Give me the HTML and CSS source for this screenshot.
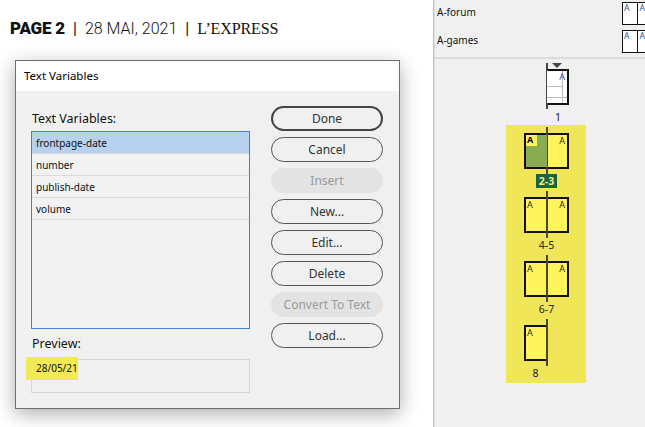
FILE: index.html
```html
<!DOCTYPE html>
<html>
<head>
<meta charset="utf-8">
<link rel="stylesheet" href="styles.css">
</head>
<body>
<div class="screen">
  <div class="left">
    <header class="masthead">
      <b class="mh-page">PAGE 2</b><span class="mh-sep">|</span><span class="mh-date">28 MAI, 2021</span><span class="mh-sep">|</span><span class="mh-pub">L’EXPRESS</span>
    </header>
    <div class="dialog">
      <div class="dlg-title">Text Variables</div>
      <div class="dlg-body">
        <div class="dlg-main">
          <div class="field-label">Text Variables:</div>
          <ul class="var-list">
            <li class="selected">frontpage-date</li>
            <li>number</li>
            <li>publish-date</li>
            <li>volume</li>
          </ul>
          <div class="field-label preview-label">Preview:</div>
          <div class="preview"><span class="hl"></span><span class="preview-text">28/05/21</span></div>
        </div>
        <div class="dlg-buttons">
          <button class="btn btn-default">Done</button>
          <button class="btn">Cancel</button>
          <button class="btn btn-disabled">Insert</button>
          <button class="btn">New...</button>
          <button class="btn">Edit...</button>
          <button class="btn">Delete</button>
          <button class="btn btn-disabled">Convert To Text</button>
          <button class="btn">Load...</button>
        </div>
      </div>
    </div>
  </div>
  <aside class="pages-panel">
    <div class="masters">
      <div class="master-row">
        <span class="master-name">A-forum</span>
        <div class="master-thumb"><span class="mpage">A</span><span class="mpage">A</span></div>
      </div>
      <div class="master-row">
        <span class="master-name">A-games</span>
        <div class="master-thumb"><span class="mpage">A</span><span class="mpage">A</span></div>
      </div>
    </div>
    <div class="pages">
      <div class="spread first">
        <div class="sp-inner single-right">
          <div class="sp-pages">
            <div class="pg pg-white">
              <span class="pl pl-v"></span><span class="pl pl-h1"></span><span class="pl pl-h2"></span>
              <span class="pa pa-right blue">A</span>
            </div>
          </div>
          <div class="sp-label">1</div>
        </div>
        <span class="marker"></span>
      </div>
      <div class="section">
        <div class="spread">
          <div class="sp-inner">
            <div class="sp-pages">
              <div class="pg pg-green"><span class="pa pa-left pa-sel">A</span></div>
              <div class="pg"><span class="pa pa-right">A</span></div>
            </div>
            <div class="sp-label"><span class="sel-label">2-3</span></div>
          </div>
        </div>
        <div class="spread">
          <div class="sp-inner">
            <div class="sp-pages">
              <div class="pg"><span class="pa pa-left">A</span></div>
              <div class="pg"><span class="pa pa-right">A</span></div>
            </div>
            <div class="sp-label">4-5</div>
          </div>
        </div>
        <div class="spread">
          <div class="sp-inner">
            <div class="sp-pages">
              <div class="pg"><span class="pa pa-left">A</span></div>
              <div class="pg"><span class="pa pa-right">A</span></div>
            </div>
            <div class="sp-label">6-7</div>
          </div>
        </div>
        <div class="spread">
          <div class="sp-inner single-left">
            <div class="sp-pages">
              <div class="pg"><span class="pa pa-left">A</span></div>
            </div>
            <div class="sp-label">8</div>
          </div>
        </div>
      </div>
    </div>
  </aside>
</div>
</body>
</html>
```
FILE: styles.css
```css
* { box-sizing: border-box; }
body { margin: 0; }
.screen {
  display: flex;
  width: 645px;
  height: 427px;
  overflow: hidden;
  background: #fff;
  font-family: "Noto Sans", sans-serif;
}
.left {
  width: 433px;
  flex: none;
  display: flex;
  flex-direction: column;
}
.masthead {
  height: 60px;
  padding: 18px 0 0 10px;
  display: flex;
  align-items: baseline;
  line-height: 20px;
  color: #111;
}
.mh-page {
  font-family: Roboto, sans-serif;
  font-weight: 900;
  font-size: 17px;
  letter-spacing: -0.2px;
}
.mh-sep {
  font-family: Roboto, sans-serif;
  font-size: 16px;
  margin: 0 8px;
  font-weight: 400;
}
.mh-date {
  font-family: Roboto, sans-serif;
  font-weight: 300;
  font-size: 16px;
  letter-spacing: 0;
}
.mh-pub {
  font-family: "Liberation Serif", serif;
  font-size: 16px;
  letter-spacing: -0.1px;
}
.dialog {
  margin-left: 15px;
  width: 385px;
  border: 1px solid #6f6f6f;
  background: #f0f0f0;
  box-shadow: 0 5px 18px rgba(0,0,0,0.32);
}
.dlg-title {
  height: 30px;
  background: #fff;
  padding-left: 8px;
  font-size: 11.5px;
  line-height: 30px;
  color: #000;
}
.dlg-body {
  display: flex;
  gap: 21px;
  padding: 15px;
}
.dlg-main {
  width: 219px;
  flex: none;
  display: flex;
  flex-direction: column;
}
.field-label {
  font-size: 12.5px;
  line-height: 25px;
  color: #111;
  padding-left: 1px;
}
.preview-label { line-height: 30px; }
.var-list {
  list-style: none;
  margin: 0;
  padding: 0;
  height: 198px;
  border: 1px solid #3c80d6;
  background: #f2f2f2;
}
.var-list li {
  height: 22px;
  line-height: 23px;
  border-bottom: 1px solid #dadada;
  padding-left: 4px;
  font-size: 10px;
  color: #111;
}
.var-list li.selected { background: #b7d2ee; }
.preview {
  position: relative;
  height: 34px;
  border: 1px solid #d6d6d6;
  padding: 0 0 0 4px;
  font-size: 10px;
  line-height: 16px;
  color: #111;
}
.hl {
  position: absolute;
  left: -6px;
  top: -3px;
  width: 52px;
  height: 23px;
  background: #f1ea55;
}
.preview-text { position: relative; }
.dlg-buttons {
  width: 112px;
  flex: none;
  display: flex;
  flex-direction: column;
  gap: 6px;
}
.btn {
  height: 25px;
  border: 1px solid #555;
  border-radius: 13px;
  background: #f0f0f0;
  font-family: "Noto Sans", sans-serif;
  font-size: 12px;
  line-height: 24px;
  color: #333;
  padding: 0;
}
.btn-default { border: 2px solid #444; line-height: 22px; }
.btn-disabled { border-color: #e3e3e3; background: #e3e3e3; color: #9a9a9a; }

.pages-panel {
  flex: 1;
  background: #f0f0f0;
  border-left: 1px solid #c4c4c4;
  box-shadow: inset 1px 0 0 #dedede;
  overflow: hidden;
  font-family: "Noto Sans", sans-serif;
}
.masters {
  height: 59px;
  padding-top: 2px;
  border-bottom: 2px solid #dcdcdc;
}
.master-row {
  height: 28px;
  display: flex;
  justify-content: space-between;
  align-items: flex-start;
}
.master-name {
  padding: 1px 0 0 3px;
  font-size: 10px;
  line-height: 18px;
  color: #111;
}
.master-thumb {
  display: flex;
  margin-right: -8px;
  border: 1.5px solid #111;
  height: 23px;
  width: 31px;
  background: #fff;
}
.mpage {
  width: 15px;
  font-size: 8.5px;
  line-height: 10px;
  padding-left: 1px;
  color: #2a55a0;
}
.mpage + .mpage { border-left: 1.5px solid #111; }

.pages {
  padding: 4px 0 0 72px;
}
.spread {
  position: relative;
  width: 80px;
  height: 64px;
  padding-top: 6px;
}
.spread.first { height: 62px; }
.spread::before {
  content: "";
  position: absolute;
  left: 40px;
  top: 0;
  width: 2px;
  height: 47px;
  background: #4a4826;
}
.spread.first::before { background: #444; height: 46px; }
.section {
  background: #f0e658;
  width: 80px;
  padding-top: 2px;
}
.sp-inner {
  margin-left: 18px;
  width: 45px;
  display: flex;
  flex-direction: column;
  align-items: center;
}
.sp-inner.single-right { margin-left: 41px; width: 22px; }
.sp-inner.single-left { width: 23px; }
.sp-pages {
  display: flex;
  width: 100%;
  height: 36px;
  border: 2px solid #111;
  background: #fff45c;
}
.single-right .sp-pages { border-left: none; background: #fff; }
.single-left .sp-pages { border-right: none; }
.pg {
  position: relative;
  flex: 1;
  height: 100%;
}
.pg-green { background: #89ab52; }
.pg-white { background: #fff; }
.pa {
  position: absolute;
  top: 1px;
  font-size: 9px;
  line-height: 10px;
  color: #2a2a10;
}
.pa-left { left: 1px; }
.pa-right { right: 2px; }
.pa-sel {
  left: 0;
  top: 0;
  width: 11px;
  height: 11px;
  padding-left: 1px;
  background: #fff45c;
  font-weight: 700;
  color: #000;
}
.blue { color: #2a55a0; }
.pl { position: absolute; background: #bdbdbd; }
.pl-v { left: 15px; top: 0; width: 1px; height: 100%; }
.pl-h1 { left: 0; right: 4px; top: 15px; height: 1px; }
.pl-h2 { left: 0; right: 0; top: 26px; height: 1px; }
.sp-label {
  margin-top: 5px;
  font-size: 10.5px;
  line-height: 14px;
  color: #222;
}
.sel-label {
  display: inline-block;
  padding: 0 3px;
  background: #176545;
  color: #f4ee7c;
  font-weight: 700;
}
.marker {
  position: absolute;
  left: 46px;
  top: 0;
  width: 0;
  height: 0;
  border-left: 5px solid transparent;
  border-right: 5px solid transparent;
  border-top: 5px solid #444;
}
```
